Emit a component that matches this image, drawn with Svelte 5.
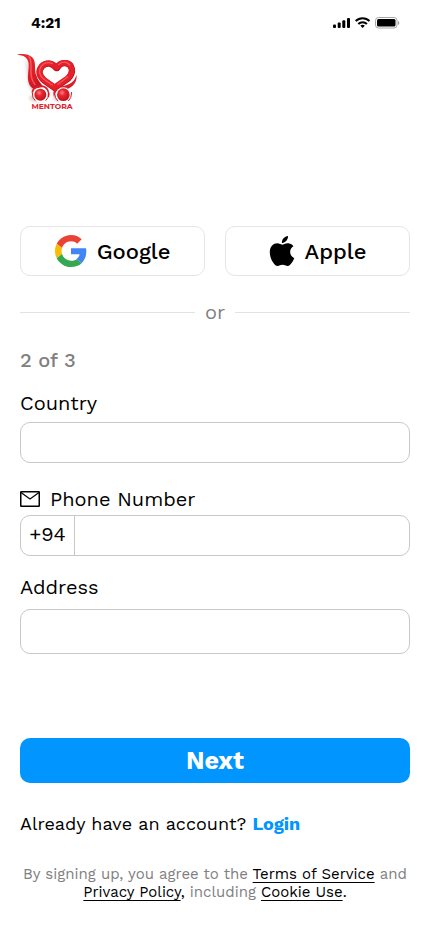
<script>
  let country = $state('');
  let phone = $state('');
  let address = $state('');
</script>

<div class="screen">
  <div class="status">
    <span class="time">4:21</span>
    <svg class="indicators" width="68" height="14" viewBox="0 0 68 14" aria-hidden="true">
      <rect x="1" y="8.500" width="3" height="3.500" rx="1" />
      <rect x="5.700" y="6.500" width="3" height="5.500" rx="1" />
      <rect x="10.300" y="4.300" width="3" height="7.700" rx="1" />
      <rect x="15" y="2" width="3" height="10" rx="1" />
      <g fill="none" stroke="#000" stroke-width="2">
        <path d="M23.700 5a9.800 9.800 0 0 1 13.800 0" />
        <path d="M26.300 8a6 6 0 0 1 8.600 0" />
      </g>
      <path d="M28.400 9.700a3.200 3.200 0 0 1 4.400 0l-2.200 2.400z" />
      <rect x="43.500" y="1.500" width="21.500" height="10.500" rx="3" fill="none" stroke="#a6a6a6" />
      <rect x="45" y="3" width="18.500" height="7.500" rx="1.500" />
      <path d="M66 5v4q1.400-.6 1.400-2T66 5z" fill="#a6a6a6" />
    </svg>
  </div>

  <header>
    <svg class="logo" width="66" height="60" viewBox="45 36 198 180" role="img" aria-label="Mentora">
      <defs>
        <linearGradient id="red" x1="0" y1="0" x2="1" y2="1">
          <stop offset="0" stop-color="#ee2a33" />
          <stop offset=".6" stop-color="#e21c26" />
          <stop offset="1" stop-color="#b8121b" />
        </linearGradient>
        <radialGradient id="ball" cx=".4" cy=".35" r=".7">
          <stop offset="0" stop-color="#ff8484" />
          <stop offset=".35" stop-color="#ea2630" />
          <stop offset="1" stop-color="#b8111a" />
        </radialGradient>
        <filter id="soft" x="-20%" y="-20%" width="140%" height="140%">
          <feGaussianBlur stdDeviation="4" />
        </filter>
      </defs>
      <g fill="#a89090" filter="url(#soft)">
        <path d="M74 54q8 46 10 76q4 22 20 30l14-12q-22-20-18-50z" opacity=".35" />
        <ellipse cx="112" cy="174" rx="24" ry="12" opacity=".45" />
        <ellipse cx="184" cy="174" rx="24" ry="12" opacity=".45" />
      </g>
      <path d="M51 43C68 40 91 42 100 56C109 72 102 90 109 106C113 119 121 130 130 140L101 147C88 139 82 124 84 104C86 83 90 62 76 52C69 46 60 47 51 43Z" fill="url(#red)" />
      <path d="M86 49C97 60 92 79 93 99C94 115 98 126 106 135" fill="none" stroke="#ff8b8b" stroke-width="4" opacity=".6" />
      <path d="M169 84C157 68 137 67 126 79C114 92 117 108 132 121L164 144L204 116C224 96 216 74 200 70C187 67 177 74 171 84" fill="none" stroke="#b1141d" stroke-width="19" stroke-linecap="round" stroke-linejoin="round" />
      <path d="M168 81C157 67 137 66 126 78C114 91 117 107 132 120L164 142L204 114C223 95 216 74 200 69C187 66 178 72 171 81" fill="none" stroke="#e5202a" stroke-width="17" stroke-linecap="round" stroke-linejoin="round" />
      <path d="M157 71C145 64 130 69 123 80C114 94 119 107 132 118L157 135M176 74C184 65 200 63 209 75M174 133L203 110" fill="none" stroke="#ff7c7c" stroke-width="4" stroke-linecap="round" opacity=".6" />
      <path d="M229 104C225 126 208 135 184 139C168 141 155 149 162 172C165 151 184 140 202 147C220 140 233 123 229 104Z" fill="#dc1d27" />
      <path d="M97 158C99 136 132 132 143 150C147 158 147 165 145 171" fill="none" stroke="#dc1d27" stroke-width="5" />
      <circle cx="121" cy="165" r="22" fill="#fff" />
      <circle cx="190" cy="165" r="23" fill="#fff" />
      <circle cx="121" cy="164" r="18" fill="url(#ball)" />
      <circle cx="190" cy="164" r="19" fill="url(#ball)" />
      <path d="M97 158Q96 174 106 182M146 158Q147 174 137 182M164 160Q164 175 174 183M215 156Q215 174 205 183" fill="none" stroke="#d41b25" stroke-width="3" />
      <text x="156" y="208" text-anchor="middle" class="wordmark">MENTORA</text>
    </svg>
  </header>

  <main>
    <div class="social">
      <button type="button">
        <svg width="32" height="32" viewBox="0 0 48 48" aria-hidden="true">
          <path fill="#EA4335" d="M24 9.5c3.540 0 6.710 1.220 9.210 3.600l6.850-6.850C35.900 2.380 30.470 0 24 0 14.620 0 6.510 5.380 2.560 13.220l7.980 6.190C12.430 13.720 17.740 9.500 24 9.500z" />
          <path fill="#4285F4" d="M46.980 24.550c0-1.570-.15-3.090-.38-4.550H24v9.020h12.940c-.58 2.960-2.260 5.480-4.780 7.180l7.730 6c4.510-4.180 7.090-10.360 7.090-17.650z" />
          <path fill="#FBBC05" d="M10.530 28.590c-.48-1.450-.76-2.990-.76-4.590s.27-3.140.76-4.590l-7.980-6.190C.92 16.460 0 20.120 0 24c0 3.880.92 7.540 2.560 10.780l7.970-6.190z" />
          <path fill="#34A853" d="M24 48c6.480 0 11.930-2.130 15.890-5.810l-7.730-6c-2.150 1.450-4.920 2.300-8.160 2.300-6.260 0-11.570-4.220-13.470-9.910l-7.980 6.190C6.510 42.620 14.620 48 24 48z" />
        </svg>
        Google
      </button>
      <button type="button">
        <svg width="26" height="30" viewBox="0 0 814 1000" aria-hidden="true">
          <path d="M788.100 340.900c-5.800 4.500-108.200 62.200-108.200 190.500 0 148.400 130.300 200.900 134.200 202.200-.6 3.200-20.700 71.900-68.700 141.900-42.800 61.600-87.500 123.100-155.500 123.100s-85.500-39.500-164-39.500c-76.500 0-103.700 40.800-165.900 40.800s-105.600-57-155.500-127C46.700 790.700 0 663 0 541.800c0-194.400 126.400-297.500 250.800-297.500 66.100 0 121.200 43.400 162.700 43.400 39.500 0 101.100-46 176.300-46 28.500 0 130.900 2.600 198.300 99.200zm-234-181.500c31.100-36.900 53.100-88.100 53.100-139.300 0-7.100-.6-14.300-1.900-20.100-50.600 1.900-110.800 33.700-147.100 75.800-28.500 32.400-55.100 83.600-55.100 135.500 0 7.800 1.300 15.600 1.900 18.100 3.200.6 8.400 1.300 13.600 1.300 45.400 0 102.500-30.400 135.500-71.300z" />
        </svg>
        Apple
      </button>
    </div>

    <div class="or">or</div>

    <form onsubmit={(e) => e.preventDefault()}>
      <p class="step">2 of 3</p>

      <label for="country">Country</label>
      <input id="country" class="box" type="text" bind:value={country} />

      <label for="phone" class="phone-label">
        <svg width="20" height="16" viewBox="0 0 20 16" fill="none" stroke="#000" stroke-width="1.500" stroke-linejoin="round" aria-hidden="true">
          <rect x=".75" y=".75" width="18.500" height="14.500" rx=".5" />
          <path d="M1 1.500l9 6.500 9-6.500" stroke-width="1.200" />
        </svg>
        Phone Number
      </label>
      <div class="box phone">
        <span class="code">+94</span>
        <input id="phone" type="tel" bind:value={phone} />
      </div>

      <label for="address" class="address-label">Address</label>
      <input id="address" class="box tall" type="text" bind:value={address} />

      <button class="next" type="submit">Next</button>
    </form>

    <p class="login">Already have an account? <a href="#login">Login</a></p>
    <p class="terms">
      By signing up, you agree to the <a href="#terms">Terms of Service</a> and
      <a href="#privacy">Privacy Policy</a><b>,</b> including <a href="#cookies">Cookie Use</a><b>.</b>
    </p>
  </main>
</div>

<style>
  :global(body) {
    margin: 0;
    background: #fff;
  }

  .screen {
    font-family: 'Work Sans', Inter, sans-serif;
    font-size: 20px;
    line-height: 24px;
    color: #000;
  }

  .screen * {
    box-sizing: border-box;
  }

  .status {
    display: flex;
    align-items: center;
    justify-content: space-between;
    height: 46px;
    padding: 0 30px 0 31px;
  }

  .time {
    font-size: 15px;
    font-weight: 700;
  }

  header {
    height: 180px;
    padding: 6px 15px 0;
  }

  .logo {
    display: block;
  }

  .wordmark {
    font-family: 'Montserrat', Inter, sans-serif;
    font-size: 23px;
    font-weight: 700;
    fill: #e0222c;
  }

  main {
    padding: 0 20px 32px;
  }

  .social {
    display: flex;
    gap: 20px;
  }

  button {
    font-family: inherit;
    cursor: pointer;
  }

  .social button {
    display: flex;
    flex: 1;
    align-items: center;
    justify-content: center;
    gap: 10px;
    height: 50px;
    padding: 0;
    border: 1px solid #e5e5e5;
    border-radius: 10px;
    background: #fff;
    color: #000;
    font-size: 22px;
    font-weight: 500;
  }

  .or {
    display: flex;
    align-items: center;
    gap: 10px;
    margin-top: 24px;
    color: #808080;
  }

  .or::before,
  .or::after {
    content: '';
    flex: 1;
    height: 1px;
    background: #e2e2e2;
  }

  form {
    display: flex;
    flex-direction: column;
  }

  p {
    margin: 0;
  }

  .step {
    margin: 24px 0 19px;
    color: #808080;
    font-weight: 500;
  }

  label {
    margin-bottom: 7px;
  }

  .box {
    width: 100%;
    height: 41px;
    padding: 0 10px;
    border: 1px solid #c8c8c8;
    border-radius: 10px;
    background: #fff;
  }

  input {
    font: inherit;
    color: inherit;
    outline: none;
  }

  .phone-label {
    display: flex;
    align-items: center;
    gap: 10px;
    margin: 24px 0 4px;
  }

  .phone {
    display: flex;
    padding: 0;
  }

  .code {
    width: 54px;
    padding-top: 6px;
    border-right: 1px solid #c8c8c8;
    text-align: center;
  }

  .phone input {
    flex: 1;
    min-width: 0;
    border: 0;
    padding: 0 10px;
    background: transparent;
  }

  .address-label {
    margin: 19px 0 10px;
  }

  .tall {
    height: 45px;
  }

  .next {
    height: 45px;
    margin-top: 84px;
    border: 0;
    border-radius: 10px;
    background: #0095ff;
    color: #fff;
    font-size: 25px;
    font-weight: 700;
  }

  .login {
    margin-top: 29px;
    font-size: 18px;
  }

  .login a {
    color: #0095ff;
    font-weight: 700;
    text-decoration: none;
  }

  .terms {
    margin-top: 29px;
    color: #808080;
    font-size: 15px;
    line-height: 18px;
    text-align: center;
  }

  .terms a,
  .terms b {
    color: #000;
    font-weight: 400;
  }

  .terms a {
    text-decoration: underline;
    text-underline-offset: 3px;
    text-decoration-thickness: 1px;
  }
</style>
